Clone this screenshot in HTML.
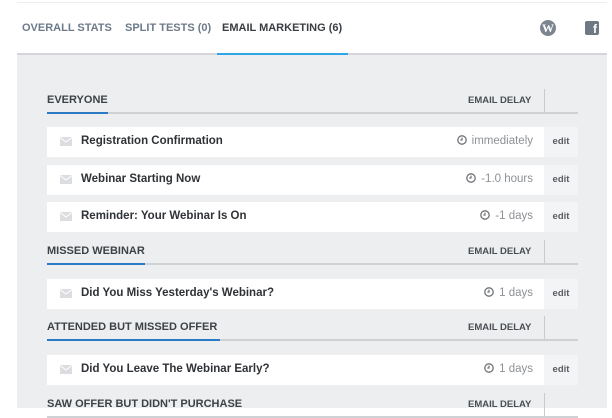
<!DOCTYPE html>
<html><head><style>
*{margin:0;padding:0;box-sizing:border-box}
body{width:612px;height:408px;overflow:hidden;background:#fff;font-family:"Liberation Sans",sans-serif;position:relative}
.a{position:absolute}
.tab{position:absolute;top:22px;font-size:11px;font-weight:bold;color:#6d7a8a;white-space:nowrap}
.panel{position:absolute;left:17px;top:55px;width:590px;height:353px;background:#eceef0}
.hd{position:absolute;left:47px;width:531px;height:22px;border-bottom:2px solid #cfd2d5}
.hd .t{position:absolute;left:0;top:2px;font-size:11px;font-weight:bold;color:#3e4247;white-space:nowrap}
.hd .b{position:absolute;left:0;bottom:-2px;height:2px;background:#2b7bc4}
.hd .d{position:absolute;left:421px;top:3px;font-size:9.5px;font-weight:bold;color:#4a4e53;white-space:nowrap}
.hd .v{position:absolute;left:497px;top:-3px;width:1px;height:23px;background:#c8cbce}
.row{position:absolute;left:47px;width:531px;height:30px;background:#fff}
.row svg.e{position:absolute;left:13px;top:10px}
.row .n{position:absolute;left:34px;top:8px;font-size:11.5px;font-weight:bold;color:#2f3236;white-space:nowrap}
.row .tm{position:absolute;right:45px;top:8px;font-size:11.5px;color:#8e9195;white-space:nowrap}
.row .tm svg{vertical-align:-1px;margin-right:5px}
.row .ed{position:absolute;right:0;top:0;width:34px;height:30px;background:#f3f4f5;font-size:9.5px;font-weight:bold;color:#5a5e63;text-align:center;line-height:30px}
</style></head><body>
<div class="a" style="left:17px;top:2px;width:590px;height:1px;background:#eee"></div>
<div class="tab" style="left:22px">OVERALL STATS</div>
<div class="tab" style="left:125px">SPLIT TESTS (0)</div>
<div class="tab" style="left:222px;color:#3a3e43">EMAIL MARKETING (6)</div>
<div class="a" style="left:540px;top:20px;width:16px;height:16px;border-radius:50%;background:#7d8690;color:#fff;font:bold 12px 'Liberation Serif',serif;text-align:center;line-height:16px">W</div>
<div class="a" style="left:585px;top:21px;width:14px;height:14px;border-radius:2px;background:#6f7885;color:#fff;font:bold 12px 'Liberation Sans',sans-serif;text-align:right;padding-right:2px;line-height:17px">f</div>
<div class="a" style="left:17px;top:53px;width:590px;height:2px;background:#d3d5d8"></div>
<div class="a" style="left:217px;top:53px;width:131px;height:2px;background:#2fa5e8"></div>
<div class="panel"></div>

<svg width="0" height="0" style="position:absolute"><defs>
<symbol id="env" viewBox="0 0 12 9"><rect width="12" height="9" fill="#dcdde0"/><path d="M0 0.5L6 5L12 0.5" stroke="#fff" stroke-width="1" fill="none"/></symbol>
<symbol id="clk" viewBox="0 0 10 10"><circle cx="5" cy="5" r="4.2" stroke="#6f7276" stroke-width="1.3" fill="none"/><path d="M5 2.6V5H3.3" stroke="#6f7276" stroke-width="1.2" fill="none"/></symbol>
</defs></svg>

<div class="hd" style="top:92px"><span class="t">EVERYONE</span><span class="b" style="width:61px"></span><span class="d">EMAIL DELAY</span><span class="v"></span></div>
<div class="row" style="top:127px"><svg class="e" width="12" height="9"><use href="#env"/></svg><span class="n">Registration Confirmation</span><span class="tm"><svg width="10" height="10"><use href="#clk"/></svg>immediately</span><span class="ed">edit</span></div>
<div class="row" style="top:165px"><svg class="e" width="12" height="9"><use href="#env"/></svg><span class="n">Webinar Starting Now</span><span class="tm"><svg width="10" height="10"><use href="#clk"/></svg>-1.0 hours</span><span class="ed">edit</span></div>
<div class="row" style="top:202px"><svg class="e" width="12" height="9"><use href="#env"/></svg><span class="n">Reminder: Your Webinar Is On</span><span class="tm"><svg width="10" height="10"><use href="#clk"/></svg>-1 days</span><span class="ed">edit</span></div>

<div class="hd" style="top:243px"><span class="t">MISSED WEBINAR</span><span class="b" style="width:98px"></span><span class="d">EMAIL DELAY</span><span class="v"></span></div>
<div class="row" style="top:279px"><svg class="e" width="12" height="9"><use href="#env"/></svg><span class="n">Did You Miss Yesterday's Webinar?</span><span class="tm"><svg width="10" height="10"><use href="#clk"/></svg>1 days</span><span class="ed">edit</span></div>

<div class="hd" style="top:319px"><span class="t">ATTENDED BUT MISSED OFFER</span><span class="b" style="width:173px"></span><span class="d">EMAIL DELAY</span><span class="v"></span></div>
<div class="row" style="top:355px"><svg class="e" width="12" height="9"><use href="#env"/></svg><span class="n">Did You Leave The Webinar Early?</span><span class="tm"><svg width="10" height="10"><use href="#clk"/></svg>1 days</span><span class="ed">edit</span></div>

<div class="hd" style="top:396px"><span class="t">SAW OFFER BUT DIDN'T PURCHASE</span><span class="d">EMAIL DELAY</span><span class="v"></span></div>
</body></html>
